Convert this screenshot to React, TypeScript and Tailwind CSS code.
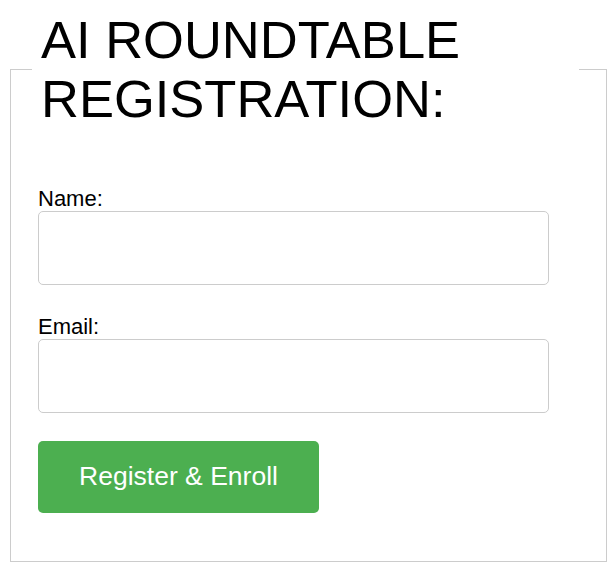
export default function App() {
  return (
    <div className="p-[10px] bg-white min-h-screen" style={{ fontFamily: '"Liberation Sans", Arial, sans-serif' }}>
      <fieldset className="border border-[#cccccc] pl-[21px] pr-[27px] pb-[48px] m-0 w-[597px]">
        <legend className="w-[547px] pl-[9px] pr-0 text-[52.5px] leading-[59px] text-black">
          AI ROUNDTABLE REGISTRATION:
        </legend>

        <form className="pl-[6px] pt-[58px]" onSubmit={(e) => e.preventDefault()}>
          <label className="block text-[22px] leading-[25px] text-black">Name:</label>
          <input
            type="text"
            className="block mt-0 w-[511px] h-[74px] border border-[#cccccc] rounded-[5px] bg-white"
          />

          <label className="block mt-[29px] text-[22px] leading-[25px] text-black">Email:</label>
          <input
            type="email"
            className="block mt-0 w-[511px] h-[74px] border border-[#cccccc] rounded-[5px] bg-white"
          />

          <button
            type="submit"
            className="mt-[28px] w-[281px] h-[72px] rounded-[5px] bg-[#4caf50] text-white text-[26.5px]"
          >
            Register &amp; Enroll
          </button>
        </form>
      </fieldset>
    </div>
  );
}
